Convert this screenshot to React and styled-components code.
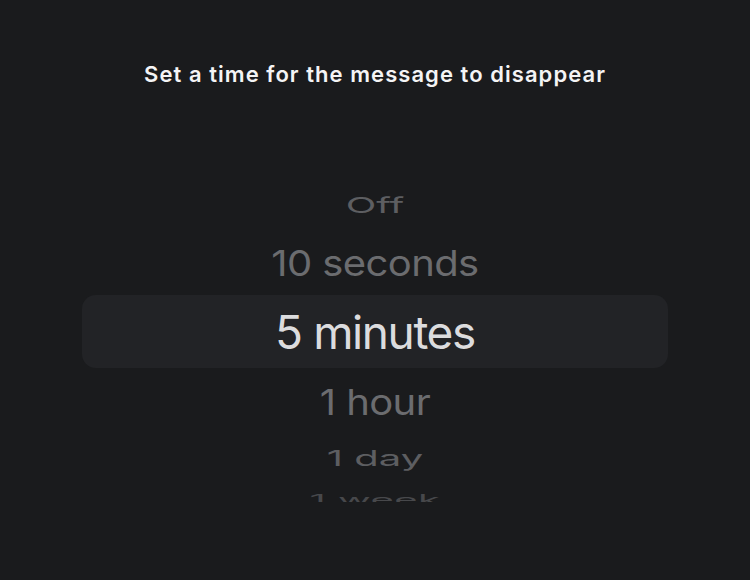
import React from 'react';
import styled, { createGlobalStyle } from 'styled-components';

const GlobalStyle = createGlobalStyle`
  html, body {
    margin: 0;
    padding: 0;
    background: #1a1b1d;
  }
  body {
    font-family: Inter, 'Noto Sans', sans-serif;
    -webkit-font-smoothing: antialiased;
  }
`;

const options = [
  { label: 'Off', size: 40, scale: 0.55, color: '#5d5e61', height: 58, spacing: 0 },
  { label: '10 seconds', size: 40, scale: 0.9, color: '#6b6c6f', height: 58, spacing: -0.6 },
  { label: '5 minutes', size: 46, scale: 1, color: '#dcdcde', height: 73, spacing: -1.4, selected: true },
  { label: '1 hour', size: 40, scale: 0.9, color: '#6b6c6f', height: 68, spacing: -0.6 },
  { label: '1 day', size: 40, scale: 0.55, color: '#5d5e61', height: 44, spacing: 0 },
  { label: '1 week', size: 40, scale: 0.36, color: '#47484b', height: 26, spacing: 0.5 },
];

function App() {
  return (
    <Screen>
      <GlobalStyle />
      <Title>Set a time for the message to disappear</Title>
      <Wheel>
        {options.map((o) => (
          <Row key={o.label} $h={o.height} $selected={o.selected}>
            <Label $size={o.size} $scale={o.scale} $color={o.color} $spacing={o.spacing}>
              {o.label}
            </Label>
          </Row>
        ))}
      </Wheel>
    </Screen>
  );
}

export default App;

const Screen = styled.div`
  width: 750px;
  height: 580px;
  display: flex;
  flex-direction: column;
  align-items: center;
  background: #1a1b1d;
  overflow: hidden;
`;

const Title = styled.h1`
  margin: 0;
  padding-top: 60px;
  font-size: 22px;
  line-height: 28px;
  font-weight: 600;
  color: #f4f4f5;
  letter-spacing: 1.05px;
`;

const Wheel = styled.div`
  margin-top: 88px;
  width: 586px;
  height: 326px;
  display: flex;
  flex-direction: column;
  overflow: hidden;
`;

const Row = styled.div`
  flex: 0 0 ${(p) => p.$h}px;
  display: flex;
  align-items: center;
  justify-content: center;
  border-radius: 14px;
  background: ${(p) => (p.$selected ? '#222326' : 'transparent')};
  margin: ${(p) => (p.$selected ? '3px 0 0' : '0')};
`;

const Label = styled.span`
  font-size: ${(p) => p.$size}px;
  line-height: 1;
  color: ${(p) => p.$color};
  letter-spacing: ${(p) => p.$spacing}px;
  transform: scaleY(${(p) => p.$scale});
  white-space: nowrap;
`;
